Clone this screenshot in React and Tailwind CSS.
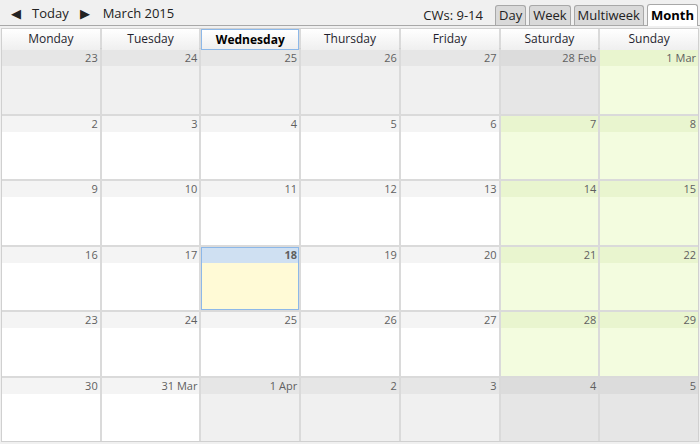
import React from "react";

const days = ["Monday", "Tuesday", "Wednesday", "Thursday", "Friday", "Saturday", "Sunday"];

// kind: cur | curWe | prev | prevWe | today
const weeks = [
  [["23", "prev"], ["24", "prev"], ["25", "prev"], ["26", "prev"], ["27", "prev"], ["28 Feb", "prevWe"], ["1 Mar", "curWe"]],
  [["2", "cur"], ["3", "cur"], ["4", "cur"], ["5", "cur"], ["6", "cur"], ["7", "curWe"], ["8", "curWe"]],
  [["9", "cur"], ["10", "cur"], ["11", "cur"], ["12", "cur"], ["13", "cur"], ["14", "curWe"], ["15", "curWe"]],
  [["16", "cur"], ["17", "cur"], ["18", "today"], ["19", "cur"], ["20", "cur"], ["21", "curWe"], ["22", "curWe"]],
  [["23", "cur"], ["24", "cur"], ["25", "cur"], ["26", "cur"], ["27", "cur"], ["28", "curWe"], ["29", "curWe"]],
  [["30", "cur"], ["31 Mar", "cur"], ["1 Apr", "prev"], ["2", "prev"], ["3", "prev"], ["4", "prevWe"], ["5", "prevWe"]],
];

const styles = {
  cur: { band: "bg-[#f4f4f4]", body: "bg-white", box: "" },
  curWe: { band: "bg-[#e9f5cf]", body: "bg-[#f3fcdf]", box: "" },
  prev: { band: "bg-[#e6e6e6]", body: "bg-[#f0f0f0]", box: "" },
  prevWe: { band: "bg-[#dcdcdc]", body: "bg-[#e6e6e6]", box: "" },
  today: { band: "bg-[#cfe0f2]", body: "bg-[#fffad6]", box: "outline outline-1 outline-[#8db8e8] -outline-offset-1" },
};

function Cell({ label, kind }) {
  const s = styles[kind];
  return (
    <div className={`flex flex-col ${s.body} ${s.box}`}>
      <div className={`h-[16px] ${s.band} text-right pr-[2px] text-[11px] leading-[16px] text-[#5f5f5f] ${kind === "today" ? "font-bold text-[#3a3a3a]" : ""}`}>
        {label}
      </div>
      <div className="flex-1" />
    </div>
  );
}

function Tab({ children, active }) {
  if (active) {
    return (
      <div className="h-[22px] -mb-px px-[3px] bg-white border border-b-0 border-[#a8a8a8] rounded-t-[3px] text-[13px] font-bold leading-[21px] text-black">
        {children}
      </div>
    );
  }
  return (
    <div className="h-[20px] px-[3px] bg-[#d9d9d9] border border-b-0 border-[#a8a8a8] rounded-t-[3px] text-[13px] leading-[19px] text-[#222]">
      {children}
    </div>
  );
}

export default function App() {
  return (
    <div
      className="w-[700px] h-[444px] bg-[#f0f0f0] flex flex-col overflow-hidden"
      style={{ fontFamily: '"Open Sans", "Noto Sans", sans-serif' }}
    >
      {/* Toolbar */}
      <div className="h-[26px] flex items-end border-b border-[#a8a8a8]">
        <div className="flex items-center self-stretch pt-[2px] text-[13px] text-[#222]">
          <span className="ml-[11px] text-[13px] leading-none">◀</span>
          <span className="ml-[11px]">Today</span>
          <span className="ml-[11px] text-[13px] leading-none">▶</span>
          <span className="ml-[13px]">March 2015</span>
        </div>
        <div className="ml-auto flex items-end gap-[3px] pr-[2px]">
          <span className="self-center mr-[9px] text-[13px] text-[#222] pt-[4px]">CWs: 9-14</span>
          <Tab>Day</Tab>
          <Tab>Week</Tab>
          <Tab>Multiweek</Tab>
          <Tab active>Month</Tab>
        </div>
      </div>

      {/* Calendar */}
      <div className="mt-[2px] mx-[1px] mb-[2px] flex-1 flex flex-col border border-[#d0d0d0] bg-[#dadada]">
        <div className="grid grid-cols-7 gap-x-[2px] h-[20px] border-b border-[#d0d0d0]">
          {days.map((d, i) => (
            <div
              key={d}
              className={`bg-gradient-to-b from-white to-[#efefef] text-center text-[12px] leading-[19px] text-[#1f1f2e] ${
                i === 2 ? "font-bold border border-[#8db8e8] text-black" : ""
              }`}
            >
              {d}
            </div>
          ))}
        </div>
        <div className="flex-1 grid grid-cols-7 grid-rows-6 gap-[2px] pt-[1px]">
          {weeks.flat().map(([label, kind], i) => (
            <Cell key={i} label={label} kind={kind} />
          ))}
        </div>
      </div>
    </div>
  );
}
